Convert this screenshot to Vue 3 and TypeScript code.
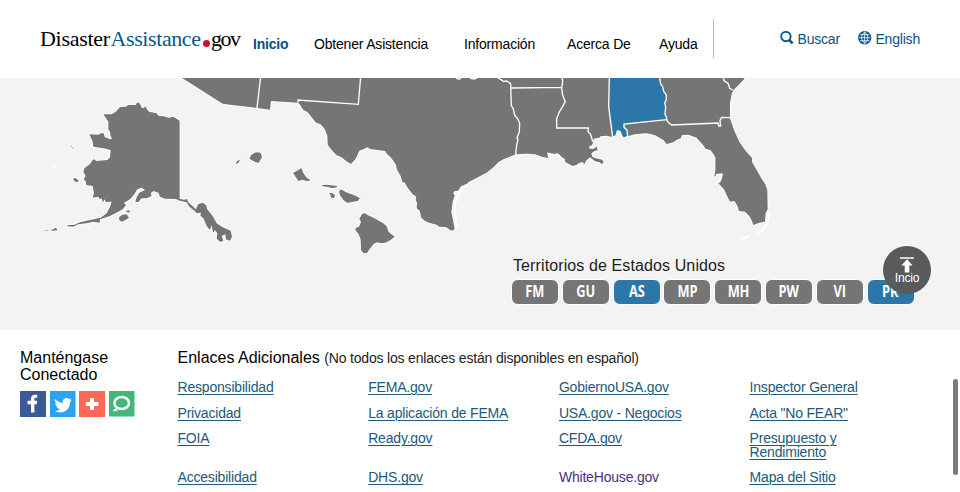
<script setup lang="ts">
type Piece = { dx: number; points: string }

interface FooterLink {
  label: string
  visited?: boolean
}

const navItems: string[] = ['Inicio', 'Obtener Asistencia', 'Información', 'Acerca De', 'Ayuda']

// Outline of the southern states, in three stretches that run from west to east
const coast: Piece[] = [
  {
    dx: 0,
    points:
      '30,20 158,101 192,106 262,114 300,119 303,93 382,98 388,101 400,120 412,126 418,133 438,158 452,163 464,177 472,197 473,224 480,234 490,245 500,256 515,262 527,272 543,282 556,268 561,258 568,242 580,238 592,232 600,237 645,243 651,252 662,262',
  },
  {
    dx: 510,
    points:
      '160,272 168,285 170,296 176,308 182,318 187,335 194,338 204,355 218,373 229,380 227,390 231,398 230,415 239,422 244,443 255,453 267,458 290,464 297,470 318,471 330,480 338,482 344,477 340,455 334,425 338,395 344,376 340,371 342,364 354,362 364,348 378,344 386,336 405,326 440,308 462,290 475,277 490,268 510,260',
  },
  {
    dx: 990,
    points:
      '47,253 80,251 105,253 125,260 144,264 151,259 145,255 147,249 161,254 170,249 180,254 182,262 194,266 196,277 205,281 218,288 230,285 237,279 249,276 252,284 258,272 270,262 285,274 299,277 304,282 311,278 307,269 285,264 277,260 274,250 284,243 293,241 290,229 282,236 269,236 268,229 276,226 279,216 281,206 298,203 302,199 318,197 338,201 348,198 352,183 360,184 364,195 370,205 383,199 405,193 437,190 452,192 465,196 490,210 500,222 520,217 530,209 543,205 545,196 565,194 590,203 598,213 607,222 617,236 632,241 640,252 646,262 646,300 643,320 651,314 664,314 664,323 655,340 672,358 680,376 690,395 703,393 712,407 717,423 735,425 748,438 756,453 760,465 778,458 795,455 797,430 803,418 802,360 797,345 785,326 770,300 756,275 756,264 735,240 718,215 702,180 690,145 690,100 695,72 700,60 716,45 732,28 736,20',
  },
]

const shift = ({ dx, points }: Piece): string =>
  points
    .split(' ')
    .map((p) => {
      const [x, y] = p.split(',').map(Number)
      return `${x + dx},${y}`
    })
    .join(' ')

const mainland: string = coast.map(shift).join(' ')

const territories = [
  { code: 'FM', active: false },
  { code: 'GU', active: false },
  { code: 'AS', active: true },
  { code: 'MP', active: false },
  { code: 'MH', active: false },
  { code: 'PW', active: false },
  { code: 'VI', active: false },
  { code: 'PR', active: true },
]

const links: FooterLink[] = [
  { label: 'Responsibilidad' },
  { label: 'FEMA.gov' },
  { label: 'GobiernoUSA.gov' },
  { label: 'Inspector General' },
  { label: 'Privacidad' },
  { label: 'La aplicación de FEMA' },
  { label: 'USA.gov - Negocios' },
  { label: 'Acta "No FEAR"' },
  { label: 'FOIA' },
  { label: 'Ready.gov' },
  { label: 'CFDA.gov' },
  { label: 'Presupuesto y Rendimiento' },
  { label: 'Accesibilidad' },
  { label: 'DHS.gov' },
  { label: 'WhiteHouse.gov', visited: true },
  { label: 'Mapa del Sitio' },
]
</script>

<template>
  <div class="page">
    <header class="header">
      <a class="logo"><span class="logo-a">Disaster</span><span class="logo-b">Assistance</span><i class="logo-dot"></i><span class="logo-c">gov</span></a>
      <nav class="nav">
        <a v-for="(item, i) in navItems" :key="item" :class="{ current: i === 0 }">{{ item }}</a>
      </nav>
      <div class="tools">
        <a class="tool search">
          <svg width="14" height="14" viewBox="0 0 14 14"><circle cx="5.9" cy="5.6" r="4.7" fill="none" stroke="#0b568c" stroke-width="1.9" /><path d="M9.200 9l3.400 3.400" stroke="#0b568c" stroke-width="2.600" /></svg>
          <span>Buscar</span>
        </a>
        <a class="tool">
          <svg width="14" height="14" viewBox="0 0 14 14"><circle cx="6.700" cy="6.700" r="6.700" fill="#0b568c" /><path d="M6.700 .9v11.600M.9 6.700h11.600M2 3.700h9.400M2 9.700h9.400M6.700 .9C2.700 4 2.700 9.500 6.700 12.500M6.700 .9C10.700 4 10.700 9.500 6.700 12.500" fill="none" stroke="#fff" stroke-width=".8" /></svg>
          <span>English</span>
        </a>
      </div>
    </header>

    <main class="map">
      <svg class="states" width="960" height="251" viewBox="0 78 960 251">
        <g class="land" transform="translate(170 70) scale(.33333)">
          <polygon :points="mainland" />
          <path d="M238 266l6-12 14-7 14 1 4 14-10 17-12-4zM197 283l4-10 9-4-4 9zM369 309l16-9 9-6 6 15 10 14 10 6-2 4-12-1-8-3-13 4-8-12zM456 345l13-1 14 2 20 2-4 4-13 3-10-3-18-3zM477 368l11 2 7 6-3 8-9-1-2-9zM507 365l5-7 17 9 28 10 13 8-7 8-21 4-10 2-12-9-10-14zM577 431l8-1 9 6 18 8 27 15 11 10 6 17 18 14-13 11-15 7-12 2-13-3-10 5-14 18-6 9-10 1-8-9-1-32-6-16-10-13 1-6 10-4 6-14-5-10z" />
        </g>
        <g class="land" transform="translate(30 90) scale(.33333)">
          <path d="M220 73L245 73 256 66 262 60 270 51 288 50 294 45 317 45 322 37 330 41 335 53 341 55 346 49 351 58 357 65 380 70 386 78 402 79 415 83 430 80 449 92V326L462 329 472 327 474 336 490 350 497 358 505 342 518 338 528 345 532 358 548 378 560 400 578 412 602 422 606 440 600 452 588 448 586 433 575 438 580 452 571 456 560 446 562 430 554 420 549 430 545 405 540 420 530 408 520 385 511 377 513 368 500 370 493 362 478 350 470 337 450 332 437 327 405 326 390 320 385 308 370 303 362 310 365 318 350 325 335 325 325 336 316 336 320 322 328 308 345 300 335 293 322 298 312 314 300 328 282 338 288 346 278 358 265 365 240 378 210 388 209 398 190 395 170 400 145 403 130 410 112 409 112 405 132 405 150 397 180 390 212 383 230 370 240 350 245 335 228 336 223 328 219 338 214 325 209 328 205 320 188 323 192 310 188 288 168 285 168 275 161 268 167 258 160 245 163 235 180 222 188 210 194 208 198 213 232 210 240 202 242 180 220 175 190 170 188 155 178 133 206 134 212 130 221 130 224 141 240 148 246 146 241 136 240 125 235 118 235 95z" />
          <path d="M118 163l11 10 8 12-6-7-6-6zM128 266l8-2 9 6-1 7-8-2zM267 382l10-8 13-1 7 10-9 6-12 6-8-4zM287 364l8-3 7 3-7 4zM40 422l10-3 10 2M60 420l12-3 3-4 6 3 1 5-10 1M69 225l6 9M173 410l10 4M242 414l5 1" />
        </g>
        <g transform="translate(170 70) scale(.33333)">
          <polygon class="active" points="1318,20 1316,110 1328,201 1338,198 1342,183 1350,184 1354,195 1360,205 1373,199 1371,180 1362,172 1362,162 1490,149 1489,140 1485,134 1487,110 1484,100 1489,88 1489,75 1481,64 1478,50 1472,42 1468,20" />
          <path class="border" d="M272 20L261 114M572 20L565 103 384 90V98M858 24l8 4 7-3M900 25l13 2 8-3M978 20L990 27 1000 34 1010 33 1022 41 1024 107 1030 117 1034 135 1044 148 1049 160 1048 185 1041 204 1044 208 1040 225 1037 254M1023 54L1175 52M1175 20l3 11-1 12-2 9 3 24 8 19-10 18-8 13-8 20v28L1255 174l-1 11 8 8 6 22M1490 149l5 9 10 7 140-6 1 9h6l-2-17 5-9 25 1M1660 20l2 12 13 9 4 14 9 5" />
          <path class="keys" d="M888 344Q850 385 854 425L861 474M1797 427l-4 29-9 18-20 20M1715 508l22-11M1638 315l17-2-2 12-6 12M1137 263l-2-12 15 3 16 4 10 6" />
        </g>
      </svg>
      <section class="territories">
        <h2>Territorios de Estados Unidos</h2>
        <div class="buttons">
          <a v-for="t in territories" :key="t.code" :class="{ on: t.active }"><span>{{ t.code }}</span></a>
        </div>
      </section>
      <a class="to-top">
        <svg width="16" height="16" viewBox="0 0 16 16"><path d="M1 .3h14v1.400H1zM8 2.200l5.600 6.300H10.300V15.500H5.700V8.500H2.400z" fill="#fff" /></svg>
        <span>Incio</span>
      </a>
    </main>

    <footer class="footer">
      <section class="social">
        <h3>Manténgase Conectado</h3>
        <div class="icons">
          <svg width="26" height="26" viewBox="0 0 26 26"><rect width="26" height="26" fill="#3d5a98" /><path d="M11 21.500v-8.300H7.500V9.800H11V8c0-3 1.600-4.300 4-4.300h2.200v3.100h-1.500c-1 0-1.300.5-1.300 1.400v1.600h2.800l-.5 3.400h-2.300v8.300z" fill="#fff" /></svg>
          <svg width="26" height="26" viewBox="0 0 26 26"><rect width="25.500" height="26" fill="#2ba3ef" /><path d="M5 8c2.200 2.400 4.700 3.700 7.800 3.900-.6-2.800 1.300-5 3.700-5 1.100 0 2 .5 2.700 1.200l2.200-.9-1.500 2.100 2-.5-1.800 2c.1 6.600-4.400 10.600-9.600 10.600-2.200 0-4.300-.7-5.700-1.700 2 .1 3.800-.4 5.100-1.500-1.600-.1-2.900-1.100-3.400-2.600h1.500c-1.800-.5-2.800-1.900-2.800-3.700l1.600.5C5.200 11.300 4.400 9.800 5 8z" fill="#fff" /></svg>
          <svg width="26" height="26" viewBox="0 0 26 26"><rect width="26" height="26" fill="#ff6858" /><path d="M11 7h4v4h4.500v4H15v4h-4v-4H6.800v-4H11z" fill="#fff" /></svg>
          <svg width="26" height="26" viewBox="0 0 26 26"><rect width="25.500" height="25.500" fill="#43b77a" /><path d="M6.500 17.500L4.300 19.800l3.900-.2z" fill="#fff" stroke="#fff" /><ellipse cx="12.700" cy="12" rx="7.300" ry="6" fill="none" stroke="#fff" stroke-width="2.500" /></svg>
        </div>
      </section>
      <section class="more">
        <h3>Enlaces Adicionales <small>(No todos los enlaces están disponibles en español)</small></h3>
        <ul class="links">
          <li v-for="l in links" :key="l.label"><a :class="{ visited: l.visited }">{{ l.label }}</a></li>
        </ul>
      </section>
    </footer>
    <div class="scrollbar"></div>
  </div>
</template>

<style>
body {
  margin: 0;
  overflow: hidden;
}
</style>

<style scoped>
.page {
  position: relative;
  width: 960px;
  height: 492px;
  overflow: hidden;
  background: #fff;
  font: 14px/16px "Liberation Sans", Arial, sans-serif;
  letter-spacing: -0.19px;
  color: #000;
}
h2,
h3 {
  margin: 0;
  font-weight: 400;
  font-size: 16px;
  letter-spacing: 0;
}
.header {
  display: grid;
  grid-template-columns: 213px 461px 1fr;
  height: 78px;
  padding-left: 40px;
  box-sizing: border-box;
}
.logo {
  display: flex;
  padding-top: 26px;
  font: 22px/26px "Liberation Serif", "Times New Roman", serif;
}
.logo-a {
  width: 70.5px;
  letter-spacing: -0.28px;
}
.logo-b {
  width: 92px;
  color: #0b568c;
  letter-spacing: -0.4px;
}
.logo-dot {
  width: 7px;
  height: 7px;
  margin: 13.500px 1px 0 0.5px;
  border-radius: 50%;
  background: #c8143c;
}
.logo-c {
  letter-spacing: -1.5px;
}
.nav {
  display: grid;
  grid-template-columns: 61px 150px 103px 92px 54px;
  height: 39px;
  margin-top: 19px;
  padding-top: 17px;
  box-sizing: border-box;
  border-right: 1px solid #bbb;
  white-space: nowrap;
}
.nav .current {
  color: #0b4f86;
  font-weight: 700;
}
.tools {
  display: flex;
  gap: 18px;
  padding: 31px 0 0 66px;
  color: #0b4f86;
}
.tool {
  display: flex;
  gap: 3.5px;
  height: 16px;
}
.tool svg {
  margin-top: -0.5px;
}
.map {
  position: relative;
  height: 251.500px;
  background: #f3f3f3;
}
.states {
  display: block;
}
.land {
  fill: #757575;
  stroke: #fff;
  stroke-width: 5px;
  stroke-linejoin: round;
  paint-order: stroke;
}
.active {
  fill: #2c76a8;
  stroke: #fff;
  stroke-width: 4px;
}
.border {
  fill: none;
  stroke: #fff;
  stroke-width: 4px;
}
.keys {
  fill: none;
  stroke: #fff;
  stroke-width: 6px;
}
.territories {
  position: absolute;
  left: 511px;
  top: 177px;
}
.territories h2 {
  padding-left: 2px;
  color: #1d1d1d;
  line-height: 21px;
  letter-spacing: 0.11px;
}
.buttons {
  display: flex;
  gap: 2.800px;
  padding-top: 3px;
}
.buttons a {
  width: 46px;
  height: 23.500px;
  border: 1px solid #fff;
  border-radius: 7px;
  background: #757575;
  color: #fff;
  font: 700 16px/23px "Open Sans", "Noto Sans", sans-serif;
  text-align: center;
}
.buttons a span {
  display: inline-block;
  transform: scaleX(0.8);
}
.buttons .on {
  background: #2c76a8;
}
.to-top {
  position: absolute;
  left: 883px;
  top: 168px;
  display: flex;
  flex-direction: column;
  align-items: center;
  width: 48px;
  height: 48px;
  padding-top: 11px;
  box-sizing: border-box;
  border-radius: 50%;
  background: #595a5c;
  color: #fff;
  font-size: 12px;
  line-height: 10px;
}
.to-top svg {
  flex: none;
}
.footer {
  display: grid;
  grid-template-columns: 157.500px 1fr;
  padding: 19.500px 0 0 20px;
}
.social h3 {
  width: 110px;
  line-height: 17px;
}
.icons {
  display: flex;
  gap: 3.500px;
  padding-top: 8px;
}
.more h3 {
  line-height: 17px;
}
.more small {
  font-size: 14px;
  letter-spacing: -0.18px;
  color: #222;
}
.links {
  display: grid;
  grid-template-columns: repeat(4, 190.700px);
  row-gap: 12px;
  margin: 0;
  padding: 14px 0 0;
  list-style: none;
  line-height: 13.600px;
}
.links li {
  max-width: 150px;
}
.links li:nth-child(4n) {
  max-width: 125px;
}
.links a {
  color: #205a7c;
  text-decoration: underline;
  text-decoration-thickness: 1px;
  text-underline-offset: 2px;
}
.links .visited {
  color: #4c2c85;
  text-decoration: none;
}
.scrollbar {
  position: absolute;
  left: 953px;
  top: 379px;
  width: 5px;
  height: 96px;
  border-radius: 3px;
  background: #7b7b7b;
}
</style>
